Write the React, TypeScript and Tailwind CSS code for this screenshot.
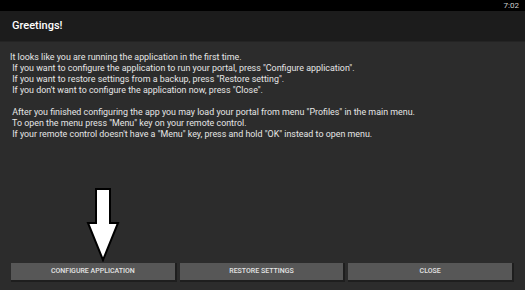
import React from 'react';

const lines1 = [
   'It looks like you are running the application in the first time.',
   ' If you want to configure the application to run your portal, press "Configure application".',
   ' If you want to restore settings from a backup, press "Restore setting".',
   ' If you don\'t want to configure the application now, press "Close".',
];
const lines2 = [
   ' After you finished configuring the app you may load your portal from menu "Profiles" in the main menu.',
   ' To open the menu press "Menu" key on your remote control.',
   ' If your remote control doesn\'t have a "Menu" key, press and hold "OK" instead to open menu.',
];

const DialogButton = ({ label }: { label: string }) => (
   <button className="flex-1 h-[19px] bg-[#575757] border-b-2 border-r-2 border-[#1e1e1e] text-[7px] font-medium text-[#e4e4e4] uppercase flex items-center justify-center">
      {label}
   </button>
);

const App = () => {
   return (
      <div className="w-[525px] h-[290px] flex flex-col bg-[#2c2c2c] relative overflow-hidden" style={{ fontFamily: 'Roboto, "Liberation Sans", sans-serif' }}>
         <div className="h-[11px] bg-black flex justify-end items-center pr-[6px]">
            <span className="text-[8px] text-[#cfcfcf] leading-none">7:02</span>
         </div>
         <div className="h-[31px] bg-[#1c1c1c] border-b border-[#242424] flex items-center pl-[12px]">
            <span className="text-[11px] font-medium text-white">Greetings!</span>
         </div>
         <div className="flex-1 flex flex-col pt-[10px] pl-[10px]">
            <div className="text-[8.9px] leading-[11px] text-[#e6e6e6] whitespace-pre">
               {lines1.map((l, i) => <div key={i}>{l}</div>)}
               <div className="h-[11px]"></div>
               {lines2.map((l, i) => <div key={i}>{l}</div>)}
            </div>
         </div>
         <div className="flex gap-[3px] px-[11px] pb-[8px]">
            <DialogButton label="Configure application" />
            <DialogButton label="Restore settings" />
            <DialogButton label="Close" />
         </div>
         <svg className="absolute left-[86px] top-[188px]" width="34" height="74" viewBox="0 0 34 74">
            <path d="M10 1 H24 V35 H32 L17 72 L2 35 H10 Z" fill="white" stroke="black" strokeWidth="2" strokeLinejoin="miter" />
         </svg>
      </div>
   );
};

export default App;
